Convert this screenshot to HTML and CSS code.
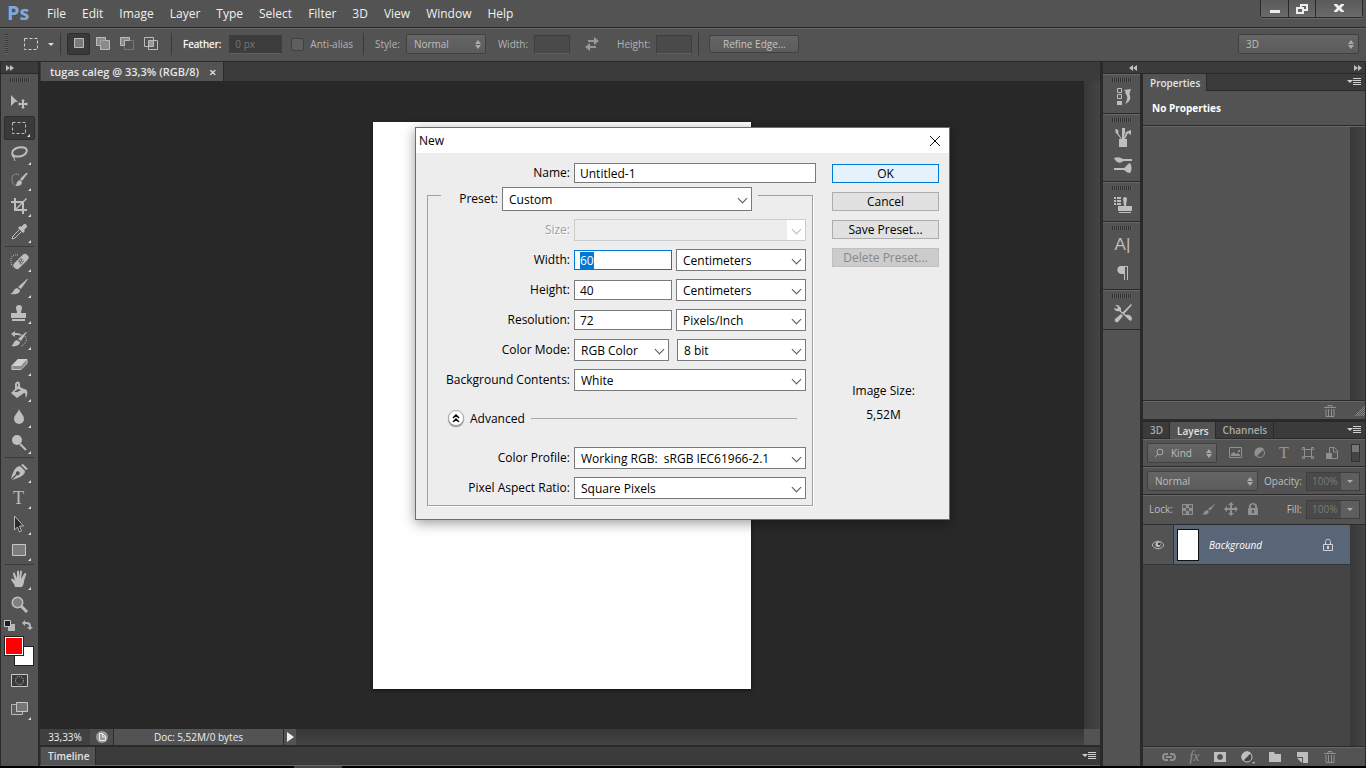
FILE: index.html
```
<!DOCTYPE html>
<html lang="en">
<head>
    <meta charset="UTF-8">
    <meta name="viewport" content="width=device-width, initial-scale=1.0">
    <title>tugas caleg @ 33,3% (RGB/8)</title>
    <link rel="stylesheet" href="styles.css">
</head>
<body>

<div class="app">
    <header class="menubar">
        <span class="logo">Ps</span>
        <nav class="menu">
            <a href="#">File</a>
            <a href="#">Edit</a>
            <a href="#">Image</a>
            <a href="#">Layer</a>
            <a href="#">Type</a>
            <a href="#">Select</a>
            <a href="#">Filter</a>
            <a href="#">3D</a>
            <a href="#">View</a>
            <a href="#">Window</a>
            <a href="#">Help</a>
        </nav>
        <div class="window-buttons">
            <button type="button" aria-label="Minimize"><svg width="12" height="12" viewBox="0 0 12 12"><path d="M1 7h10v3H1z"/></svg></button>
            <button type="button" aria-label="Restore"><svg width="12" height="12" viewBox="0 0 12 12"><path fill-rule="evenodd" d="M4 1h8v7H8v3H0V4h4zM6 3v1h2v2h2V3zM2 6v3h4V6z"/></svg></button>
            <button type="button" class="close" aria-label="Close"><svg width="12" height="12" viewBox="0 0 12 12"><path d="M1 1h3l2 2 2-2h3v1L8 5l3 3v1H8L6 7 4 9H1V8l3-3-3-3z"/></svg></button>
        </div>
    </header>

    <!-- Options bar for the marquee tool -->
    <div class="options">
        <span class="grip-v"></span>
        <button type="button" class="preset-tool" aria-label="Rectangular Marquee presets">
            <svg width="16" height="16" viewBox="0 0 16 16"><rect x="1.500" y="2.500" width="13" height="11" fill="none" stroke="#d0d0d0" stroke-dasharray="3 2"/></svg>
            <span class="caret"></span>
        </button>
        <span class="divider"></span>
        <div class="modes">
            <button type="button" class="active" aria-label="New selection"><svg width="16" height="16" viewBox="0 0 16 16"><path fill="#7a7a7a" stroke="#bbb" d="M3.500 2.500h9v9h-9z"/></svg></button>
            <button type="button" aria-label="Add to selection"><svg width="16" height="16" viewBox="0 0 16 16"><path fill="#8a8a8a" stroke="#bbb" d="M1.500 1.500h9v3h4v9h-9v-4h-4z"/><path fill="none" stroke="#a5a5a5" d="M5.500 9V4.500H10"/></svg></button>
            <button type="button" aria-label="Subtract from selection"><svg width="16" height="16" viewBox="0 0 16 16"><path fill="none" stroke="#777" d="M5.500 4.500h9v9h-9z"/><path fill="#8a8a8a" stroke="#bbb" d="M1.500 1.500h9v3h-5v5h-4z"/></svg></button>
            <button type="button" aria-label="Intersect with selection"><svg width="16" height="16" viewBox="0 0 16 16"><path fill="none" stroke="#bbb" d="M1.500 1.500h9v9h-9zM5.500 4.500h9v9h-9z"/><path fill="#999" d="M6 5h4v5H6z"/></svg></button>
        </div>
        <span class="divider"></span>
        <label class="strong" for="feather">Feather:</label>
        <input class="field feather" id="feather" type="text" value="0 px">
        <input class="check" id="anti" type="checkbox" disabled>
        <label class="anti-label" for="anti">Anti-alias</label>
        <span class="divider"></span>
        <label for="style">Style:</label>
        <span class="dark-select style-select"><select id="style"><option>Normal</option></select></span>
        <label for="opt-width">Width:</label>
        <input class="field short" id="opt-width" type="text" disabled>
        <button type="button" class="swap" aria-label="Swap width and height"><svg width="16" height="16" viewBox="0 0 16 16"><path fill="#999" d="M4 4h6V1l5 4-5 4V6H4zM12 10H6V7l-5 4 5 4v-3h6z"/></svg></button>
        <label for="opt-height">Height:</label>
        <input class="field short" id="opt-height" type="text" disabled>
        <span class="divider"></span>
        <button type="button" class="dark-button">Refine Edge...</button>
        <span class="dark-select workspace-select"><select aria-label="Workspace"><option>3D</option></select></span>
    </div>

    <div class="workspace">
        <aside class="tools">
            <div class="collapse"><button type="button" aria-label="Expand tools"><svg width="8" height="6" viewBox="0 0 8 6"><path d="M0 0l4 3-4 3zM4 0l4 3-4 3z"/></svg></button></div>
            <div class="grip"></div>
            <div class="tool-list">
                <button type="button" class="tool plain" aria-label="Move"><svg viewBox="0 0 20 20"><path d="M2 3l7 7-3 0-4 4z"/><path d="M14 7l2 2h-1v2h2v-1l2 2-2 2v-1h-2v2h1l-2 2-2-2h1v-2h-2v1l-2-2 2-2v1h2V9h-1z"/></svg></button>
                <button type="button" class="tool active" aria-label="Marquee"><svg viewBox="0 0 20 20"><rect class="line" x="3.500" y="4.500" width="13" height="11" stroke-dasharray="3 2"/></svg></button>
                <button type="button" class="tool" aria-label="Lasso"><svg viewBox="0 0 20 20"><ellipse class="line thick" cx="10.500" cy="8" rx="7.500" ry="4.500" transform="rotate(-14 10 8)"/><path class="line" d="M4 10c-2 2 0 4 2 3-1-3-3-1-1 1l1 3"/></svg></button>
                <button type="button" class="tool" aria-label="Quick Selection"><svg viewBox="0 0 20 20"><path class="line" stroke-dasharray="1 1" d="M10 5C8 3 3 4 3 8c0 3 0 6 3 7"/><path d="M19 3l-6 8-2-2 6-6zM11 10l2 2c0 4-4 4-7 4 2-1 1-5 5-6z"/></svg></button>
                <button type="button" class="tool" aria-label="Crop"><svg viewBox="0 0 20 20"><path fill-rule="evenodd" d="M5 2h2v3h7l3-3 1 1-3 3v7h3v2h-3v3h-2v-3H5V7H2V5h3zM7 7v5l5-5zM8 13h5V8z"/></svg></button>
                <button type="button" class="tool" aria-label="Eyedropper"><svg viewBox="0 0 20 20"><path d="M14 3c2-3 6 1 3 3l-2 2 1 1-2 2-5-5 2-2 1 1z"/><path class="line" d="M10 8l-6 6-1 3 3-1 6-6"/></svg></button>
                <hr>
                <button type="button" class="tool" aria-label="Healing Brush"><svg viewBox="0 0 20 20"><path class="line" stroke-dasharray="1 1" d="M9 4C4 3 2 6 2 9s0 6 3 7"/><rect x="3" y="7" width="18" height="7" rx="3" transform="rotate(-45 12 10.500)"/><path fill="#777" d="M12 7l3 3-3 4-3-4z"/><path d="M11 9h1v1h-1zM12 11h1v1h-1zM13 9h1v1h-1z"/></svg></button>
                <button type="button" class="tool" aria-label="Brush"><svg viewBox="0 0 20 20"><path d="M19 2l-7 10-3-2 9-8zM8 11l3 2c0 4-5 5-10 4 4-1 3-5 7-6z"/></svg></button>
                <button type="button" class="tool" aria-label="Clone Stamp"><svg viewBox="0 0 20 20"><path d="M7 5a3 3 0 0 1 6 0c0 2-1 2-1 5h5v5H2v-5h6C8 7 7 7 7 5zM3 16h13v2H3z"/></svg></button>
                <button type="button" class="tool" aria-label="History Brush"><svg viewBox="0 0 20 20"><path d="M2 5l4-3v2c5 0 6 1 8 3-3-1-5-1-8-1v2zM18 3l-6 9-3-2 8-7zM8 11l3 2c0 3-4 5-9 4 3-1 2-5 6-6z"/><path class="line" stroke-dasharray="1 1" d="M16 7c3 4 0 9-4 10"/></svg></button>
                <button type="button" class="tool" aria-label="Eraser"><svg viewBox="0 0 20 20"><path fill="#8c8c8c" stroke="#c8c8c8" d="M9 4.500h9v4l-6 6H3v-4z"/><path fill="#d0d0d0" d="M9 4h9l-6 7H3z"/></svg></button>
                <button type="button" class="tool" aria-label="Paint Bucket"><svg viewBox="0 0 20 20"><path class="line thick" d="M7 9V3c1-2 3-2 3 0v5"/><path fill-rule="evenodd" d="M9 5l6 3c4 0 4 5 2 9-1-3 0-5-2-5l-7 5-6-5zM9 8l-4 3h3l4-2z"/></svg></button>
                <button type="button" class="tool" aria-label="Blur"><svg viewBox="0 0 20 20"><path d="M10 2c2 5 5 6 5 10a5 5 0 0 1-10 0c0-4 4-6 5-10z"/></svg></button>
                <button type="button" class="tool" aria-label="Dodge"><svg viewBox="0 0 20 20"><circle cx="8" cy="7" r="5"/><path class="line thick" d="M11 11l6 6"/></svg></button>
                <hr>
                <button type="button" class="tool" aria-label="Pen"><svg viewBox="0 0 20 20"><path d="M12 3l2-1 5 5-2 1zM11 4l5 5c0 4-4 6-13 9l5-5a2 2 0 1 0-1-1l-5 5C4 9 6 5 11 4z"/></svg></button>
                <button type="button" class="tool" aria-label="Type"><span class="serif">T</span></button>
                <button type="button" class="tool" aria-label="Path Selection"><svg viewBox="0 0 20 20"><path fill="#282828" stroke="#b8b8b8" d="M5.500 2v14l3-3 2 5 2-1-2-5h4z"/></svg></button>
                <button type="button" class="tool" aria-label="Rectangle"><svg viewBox="0 0 20 20"><path fill="#7c7c7c" stroke="#c8c8c8" d="M3.500 4.500h13v11h-13z"/></svg></button>
                <hr>
                <button type="button" class="tool" aria-label="Hand"><svg viewBox="0 0 20 20"><path d="M6 18c0-3-4-6-4-8 2-1 3 1 4 2L4 5c0-2 2-2 2 0l2 4V3c0-2 2-2 2 0v6l1-6c0-2 2-2 2 0l-1 7 3-5c1-2 3-1 2 1l-2 6c0 3-1 4-2 6z"/></svg></button>
                <button type="button" class="tool plain" aria-label="Zoom"><svg viewBox="0 0 20 20"><circle class="line thick" cx="8.500" cy="7.500" r="5"/><circle fill="#808080" cx="8.500" cy="7.500" r="4"/><path class="line heavy" d="M12 11l6 6"/></svg></button>
            </div>
            <div class="swatch-controls">
                <svg width="11" height="11" viewBox="0 0 11 11"><path fill="#b8b8b8" d="M4 4h7v7H4z"/><path fill="#1e1e1e" stroke="#c8c8c8" d="M.5.5h6v6h-6z"/></svg>
                <svg width="11" height="11" viewBox="0 0 11 11"><path fill="#b8b8b8" d="M0 3l3-3v2c5 0 6 1 6 5h2l-3 3-3-3h2c0-3-1-3-4-3v2z"/></svg>
            </div>
            <div class="swatches">
                <button type="button" class="swatch back" aria-label="Background color"></button>
                <button type="button" class="swatch front" aria-label="Foreground color"></button>
            </div>
            <button type="button" class="tool plain mask" aria-label="Quick Mask"><svg viewBox="0 0 20 20"><path fill="#3a3a3a" stroke="#c8c8c8" d="M2.500 3.500h16v12h-16z"/><circle class="line" cx="10.500" cy="9.500" r="4" stroke-dasharray="1 1"/></svg></button>
            <button type="button" class="tool" aria-label="Screen Mode"><svg viewBox="0 0 20 20"><path fill="#5e5e5e" stroke="#b8b8b8" d="M2.500 5.500h11v10h-11z"/><path fill="#777" stroke="#c8c8c8" d="M7.500 3.500h11v9h-11z"/></svg></button>
        </aside>

        <main class="document">
            <div class="doc-tabs">
                <span class="doc-tab">tugas caleg @ 33,3% (RGB/8)<button type="button" aria-label="Close document">×</button></span>
            </div>
            <div class="canvas-row">
                <div class="canvas"><div class="page"></div></div>
                <div class="scrollbar"></div>
            </div>
            <div class="status">
                <span class="zoom">33,33%</span>
                <button type="button" class="export" aria-label="Export"><svg width="12" height="12" viewBox="0 0 12 12"><circle cx="6" cy="6" r="6" fill="#999"/><path fill="none" stroke="#eee" d="M3.500 2.500h3l3 3v4h-6zM6.500 3v3h3"/></svg></button>
                <span class="doc-size">Doc: 5,52M/0 bytes</span>
                <button type="button" class="more" aria-label="More"><svg width="7" height="10" viewBox="0 0 7 10"><path fill="#eee" d="M0 0l7 5-7 5z"/></svg></button>
                <span class="track"></span>
                <span class="corner"></span>
            </div>
            <div class="tabs timeline">
                <button type="button" class="tab active">Timeline</button>
                <button type="button" class="panel-menu" aria-label="Timeline menu"></button>
            </div>
        </main>

        <div class="side">
            <div class="collapse side-collapse">
                <button type="button" aria-label="Expand dock"><svg width="8" height="6" viewBox="0 0 8 6"><path d="M4 0v6L0 3zM8 0v6L4 3z"/></svg></button>
                <button type="button" aria-label="Collapse panels"><svg width="8" height="6" viewBox="0 0 8 6"><path d="M0 0l4 3-4 3zM4 0l4 3-4 3z"/></svg></button>
            </div>
            <div class="side-row">
                <div class="dock">
                    <div class="dock-group">
                        <div class="grip"></div>
                        <button type="button" aria-label="History"><svg viewBox="0 0 20 20"><path class="line" d="M4.500 1.500h4v4h-4zM4.500 7.500h4v4h-4z"/><path d="M4 14h5v4H4zM11 3l7-1-2 6-2-2zM14 4c6 6 3 11-2 13 3-5 3-8 0-11z"/></svg></button>
                    </div>
                    <div class="dock-group">
                        <div class="grip"></div>
                        <button type="button" aria-label="Brush Presets"><svg viewBox="0 0 20 20"><path d="M6 12h8v8H6zM2 2c4 0 4 3 3 4l4 6H8L4 7C2 6 3 4 2 2zM9 1h3v4l-1 7H9L9 5zM18 3v5l-3-2-3 6h-1l2-7z"/></svg></button>
                        <button type="button" aria-label="Brush"><svg viewBox="0 0 20 20"><path d="M1 3c4-2 8 0 9 1h9v2h-9c-2 3-7 2-9-3zM1 13h10c2-1 4-5 6-5 2 3 2 8 0 10-3 0-4-2-6-3H1z"/></svg></button>
                    </div>
                    <div class="dock-group">
                        <div class="grip"></div>
                        <button type="button" aria-label="Clone Source"><svg viewBox="0 0 20 20"><path d="M1 2h2v2H1zM4 2h4v2H4zM1 5h2v2H1zM4 5h4v2H4zM1 8h2v2H1zM4 8h4v2H4zM10 4a2 2 0 0 1 4 0l-1 7h6v5H5v-5h6zM6 17h12v1H6z"/></svg></button>
                    </div>
                    <div class="dock-group">
                        <div class="grip"></div>
                        <button type="button" class="glyph" aria-label="Character">A|</button>
                        <button type="button" aria-label="Paragraph"><svg viewBox="0 0 20 20"><path d="M8 3h7v14h-1V4h-2v13h-1v-6H9C3 11 3 3 8 3z"/></svg></button>
                    </div>
                    <div class="dock-group">
                        <div class="grip"></div>
                        <button type="button" aria-label="Tool Presets"><svg viewBox="0 0 20 20"><path d="M2 2l3 0 3 3v3l5 4c3-1 6 1 6 4l-1 2-2-1-2-2-2-2-6-5C4 9 1 7 1 5l3 1 1-2zM18 1l1 1-8 9-2-1zM8 11l2 2-5 6c-2 1-4-1-3-3z"/></svg></button>
                    </div>
                </div>

                <div class="panels">
                    <section class="properties">
                        <div class="tabs">
                            <button type="button" class="tab active">Properties</button>
                            <button type="button" class="panel-menu" aria-label="Properties menu"></button>
                        </div>
                        <div class="no-properties">No Properties</div>
                        <div class="properties-body"><div class="scrollbar"></div></div>
                        <div class="panel-footer">
                            <button type="button" aria-label="Delete"><svg width="12" height="12" viewBox="0 0 12 12"><path fill="none" stroke="#909090" d="M0 2.500h12M4 2V.5h4V2M2 4v7.500h8V4M4.500 4v7M7.500 4v7"/></svg></button>
                            <span class="resizer"></span>
                        </div>
                    </section>

                    <section class="layers">
                        <div class="tabs">
                            <button type="button" class="tab">3D</button>
                            <button type="button" class="tab active">Layers</button>
                            <button type="button" class="tab">Channels</button>
                            <button type="button" class="panel-menu" aria-label="Layers menu"></button>
                        </div>
                        <div class="layer-row">
                            <span class="dark-select kind">
                                <svg width="10" height="10" viewBox="0 0 10 10"><circle cx="6" cy="4" r="3" fill="none" stroke="#aaa"/><path stroke="#aaa" d="M4 6L1 9"/></svg>
                                <select aria-label="Filter type"><option>Kind</option></select>
                            </span>
                            <div class="filters">
                                <button type="button" aria-label="Pixel layers"><svg viewBox="0 0 14 14"><path fill="none" stroke="#909090" d="M.5 1.500h12v10H.5z"/><path d="M2 10V8l3-2 2 2 2-1 2 2v1zM9 4h2v2H9z"/></svg></button>
                                <button type="button" aria-label="Adjustment layers"><svg viewBox="0 0 14 14"><circle cx="7" cy="7" r="4.500" fill="#555" stroke="#909090"/><path d="M3 11A5 5 0 1 1 11 3z"/></svg></button>
                                <button type="button" class="serif" aria-label="Type layers">T</button>
                                <button type="button" aria-label="Shape layers"><svg viewBox="0 0 14 14"><path fill="none" stroke="#909090" d="M3.500 3.500h7v7h-7zM1.500 1.500h2v2h-2zM10.500 1.500h2v2h-2zM1.500 10.500h2v2h-2zM10.500 10.500h2v2h-2z"/></svg></button>
                                <button type="button" aria-label="Smart objects"><svg viewBox="0 0 14 14"><path fill="none" stroke="#909090" d="M4.500 7V1.500h5l3 3v8H7M8.500 2v4h4"/><path d="M1 7h6v6H1z"/></svg></button>
                            </div>
                            <button type="button" class="toggle" aria-label="Toggle filtering"></button>
                        </div>
                        <div class="layer-row">
                            <span class="dark-select blend"><select aria-label="Blend mode"><option>Normal</option></select></span>
                            <label class="amount-label" for="opacity">Opacity:</label>
                            <span class="amount"><input id="opacity" type="text" value="100%" disabled><button type="button" aria-label="Opacity slider"><span class="caret"></span></button></span>
                        </div>
                        <div class="layer-row lock-row">
                            <span class="lock-label">Lock:</span>
                            <div class="locks">
                                <button type="button" aria-label="Lock transparent pixels"><svg viewBox="0 0 14 14"><path fill="#909090" d="M2 2h11v11H2z"/><path fill="#5e5e5e" d="M3 3h3v3H3zM9 3h3v3H9zM6 6h3v3H6zM3 9h3v3H3zM9 9h3v3H9z"/></svg></button>
                                <button type="button" aria-label="Lock image pixels"><svg viewBox="0 0 16 14"><path d="M16 0L9 9 7 7zM6 8l2 2c-1 3-4 4-8 3 3-1 2-4 6-5z"/></svg></button>
                                <button type="button" aria-label="Lock position"><svg viewBox="0 0 14 14"><path d="M7 0l3 3H8v3h3V4l3 3-3 3V8H8v3h2l-3 3-3-3h2V8H3v2L0 7l3-3v2h3V3H4z"/></svg></button>
                                <button type="button" aria-label="Lock all"><svg viewBox="0 0 14 14"><path fill-rule="evenodd" d="M2 6h1V4c0-4 8-4 8 0v2h1v7H2zM5 6h4V4c0-2-4-2-4 0zM6 8v3h2V8z"/></svg></button>
                            </div>
                            <label class="amount-label" for="fill">Fill:</label>
                            <span class="amount"><input id="fill" type="text" value="100%" disabled><button type="button" aria-label="Fill slider"><span class="caret"></span></button></span>
                        </div>
                        <div class="layer-list">
                            <div class="layer-items">
                                <div class="layer">
                                    <button type="button" class="eye" aria-label="Toggle visibility"><svg width="12" height="10" viewBox="0 0 12 10"><path fill="none" stroke="#c0c0c0" d="M0 5c3-5 9-5 12 0-3 5-9 5-12 0z"/><circle cx="6" cy="4.500" r="2.500" fill="#c0c0c0"/><path fill="#333" d="M6 3h2v2H6z"/></svg></button>
                                    <div class="layer-main">
                                        <span class="thumb"></span>
                                        <span class="layer-name">Background</span>
                                        <svg width="12" height="14" viewBox="0 0 12 14"><path fill="none" stroke="#d0d4da" d="M1.500 6.500h9v6h-9zM3.500 6V3.500c0-3 5-3 5 0V6"/><path fill="#d0d4da" d="M5 8h2v3H5z"/></svg>
                                    </div>
                                </div>
                            </div>
                            <div class="scrollbar"></div>
                        </div>
                        <div class="panel-footer layer-actions">
                            <button type="button" aria-label="Link layers"><svg viewBox="0 0 14 14"><path fill="none" stroke="#909090" stroke-width="2" d="M6 4H4C0 4 0 10 4 10h2M8 4h2c4 0 4 6 0 6H8M4 7h6"/></svg></button>
                            <button type="button" class="fx" aria-label="Layer style">fx</button>
                            <button type="button" aria-label="Add mask"><svg viewBox="0 0 14 14"><path fill-rule="evenodd" d="M1 2h12v10H1zM7 4a3 3 0 1 0 .1 0z"/></svg></button>
                            <button type="button" aria-label="New adjustment layer"><svg viewBox="0 0 14 14"><circle cx="6" cy="7" r="5" fill="#444" stroke="#c8c8c8"/><path d="M2 11A5 5 0 0 1 10 3zM11 12h3l-1 2z"/></svg></button>
                            <button type="button" aria-label="New group"><svg viewBox="0 0 14 14"><path d="M1 2h5l1 2h6v8H1z"/></svg></button>
                            <button type="button" aria-label="New layer"><svg viewBox="0 0 14 14"><path d="M2 2h11v11H8V7H2zM2 8h5v5z"/></svg></button>
                            <button type="button" aria-label="Delete layer"><svg viewBox="0 0 14 14"><path fill="none" stroke="#909090" d="M1 3.500h12M5 3V1.500h4V3M3 5v7.500h8V5M5.500 5v7M8.500 5v7"/></svg></button>
                        </div>
                    </section>
                </div>
            </div>
        </div>
    </div>
    <div class="taskbar-edge"></div>
</div>

<div class="dialog" role="dialog" aria-labelledby="dialog-title">
    <div class="dialog-title">
        <span id="dialog-title">New</span>
        <button type="button" aria-label="Close dialog"><svg width="12" height="12" viewBox="0 0 12 12"><path fill="none" stroke="#111" d="M1 1l10 10M11 1L1 11"/></svg></button>
    </div>
    <form class="dialog-body">
        <div class="dialog-main">
            <div class="row name-row">
                <label for="name">Name:</label>
                <input id="name" type="text" value="Untitled-1">
            </div>
            <fieldset>
                <legend>
                    <label for="preset">Preset:</label>
                    <span class="select preset"><select id="preset"><option>Custom</option></select></span>
                </legend>
                <div class="row disabled">
                    <label for="size">Size:</label>
                    <span class="select"><select id="size" disabled><option></option></select></span>
                </div>
                <div class="row">
                    <label for="width">Width:</label>
                    <input id="width" type="text" value="60">
                    <span class="select unit"><select aria-label="Width unit"><option>Centimeters</option></select></span>
                </div>
                <div class="row">
                    <label for="height">Height:</label>
                    <input id="height" type="text" value="40">
                    <span class="select unit"><select aria-label="Height unit"><option>Centimeters</option></select></span>
                </div>
                <div class="row">
                    <label for="resolution">Resolution:</label>
                    <input id="resolution" type="text" value="72">
                    <span class="select unit"><select aria-label="Resolution unit"><option>Pixels/Inch</option></select></span>
                </div>
                <div class="row mode-row">
                    <label for="mode">Color Mode:</label>
                    <span class="select"><select id="mode"><option>RGB Color</option></select></span>
                    <span class="select unit"><select aria-label="Bit depth"><option>8 bit</option></select></span>
                </div>
                <div class="row">
                    <label for="contents">Background Contents:</label>
                    <span class="select"><select id="contents"><option>White</option></select></span>
                </div>
                <div class="advanced">
                    <button type="button" aria-label="Toggle advanced options"><svg width="8" height="8" viewBox="0 0 8 8"><path fill="none" stroke="#000" stroke-width="1.500" d="M1 4l3-3 3 3M1 8l3-3 3 3"/></svg></button>
                    <span>Advanced</span>
                </div>
                <div class="row">
                    <label for="profile">Color Profile:</label>
                    <span class="select"><select id="profile"><option>Working RGB:&nbsp; sRGB IEC61966-2.1</option></select></span>
                </div>
                <div class="row">
                    <label for="ratio">Pixel Aspect Ratio:</label>
                    <span class="select"><select id="ratio"><option>Square Pixels</option></select></span>
                </div>
            </fieldset>
        </div>
        <div class="dialog-side">
            <button type="button" class="primary">OK</button>
            <button type="button">Cancel</button>
            <button type="button">Save Preset...</button>
            <button type="button" disabled>Delete Preset...</button>
            <div class="image-size">
                <span>Image Size:</span>
                <span>5,52M</span>
            </div>
        </div>
    </form>
</div>

<script>
    // Start with the width value selected
    document.getElementById('width').select();
</script>

</body>
</html>
```
FILE: styles.css
```
:root {
    --panel: #535353;
    --bar: #3b3b3b;
    --canvas: #282828;
    --edge: #2a2a2a;
    --light: #686868;
    --icon: #bebebe;
    --blue: #0078d7;
}
* {
    box-sizing: border-box;
}
body {
    margin: 0;
    font-family: "Open Sans", "Noto Sans", sans-serif;
    font-size: 10px;
    color: #d6d6d6;
    background: #000;
    overflow: hidden;
}
button, input, select {
    font: inherit;
    color: inherit;
    margin: 0;
    padding: 0;
    border: 0;
    border-radius: 0;
    background: none;
    outline: none;
}
select {
    appearance: none;
    width: 100%;
    height: 100%;
}
svg {
    display: block;
    flex: none;
    fill: var(--icon);
}
.line {
    fill: none;
    stroke: var(--icon);
}
.thick {
    stroke-width: 2;
}
.heavy {
    stroke-width: 3;
}
.app {
    display: flex;
    flex-direction: column;
    height: 100vh;
    background: var(--panel);
}

/* menu bar */
.menubar {
    display: flex;
    align-items: center;
    height: 28px;
    padding-bottom: 1px;
    border-bottom: 1px solid var(--edge);
}
.logo {
    width: 40px;
    padding-left: 7px;
    font-size: 20px;
    line-height: 24px;
    font-weight: 700;
    color: #7fabdc;
}
.menu {
    display: flex;
    gap: 16px;
    padding-left: 7px;
    font-size: 12px;
}
.menu a {
    color: #f0f0f0;
    text-decoration: none;
}
.window-buttons {
    display: flex;
    align-self: flex-start;
    margin-left: auto;
    margin-right: 3px;
    border: 1px solid var(--edge);
    border-top: 0;
    border-radius: 0 0 3px 3px;
    box-shadow: 0 1px 0 var(--light);
}
.window-buttons button {
    display: flex;
    align-items: center;
    justify-content: center;
    width: 27px;
    height: 17px;
    border-left: 1px solid var(--edge);
    background: linear-gradient(#5a5a5a, #6a6a6a);
}
.window-buttons button:first-child {
    border-left: 0;
}
.window-buttons .close {
    width: 47px;
}
.window-buttons svg {
    fill: #eee;
}

/* options bar */
.options {
    display: flex;
    align-items: center;
    height: 34px;
    padding-left: 5px;
    padding-bottom: 2px;
    border-top: 1px solid var(--light);
    border-bottom: 1px solid var(--edge);
    color: #b4b4b4;
}
.grip-v {
    width: 3px;
    height: 20px;
    background: repeating-linear-gradient(#333 0 1px, #666 1px 2px);
}
.preset-tool {
    display: flex;
    align-items: center;
    gap: 9px;
    margin-left: 15px;
}
.caret {
    border: 3px solid transparent;
    border-top-color: #ddd;
    border-bottom: 0;
}
.divider {
    width: 1px;
    height: 22px;
    margin: 0 6px;
    background: #3a3a3a;
}
.modes {
    display: flex;
    gap: 1px;
    margin-right: 3px;
}
.modes button {
    display: grid;
    place-items: center;
    width: 23px;
    height: 22px;
}
.modes .active {
    border: 1px solid #2d2d2d;
    border-radius: 2px;
    background: #3a3a3a;
}
.strong {
    color: #fff;
    text-shadow: 0 0 1px #ccc;
}
.field {
    height: 19px;
    padding-left: 5px;
    border: 1px solid #3e3e3e;
    border-bottom-color: #5e5e5e;
    background: #4a4a4a;
}
.feather {
    width: 53px;
    margin: 0 9px 0 8px;
    background: #3c3c3c;
    color: #777;
}
.check {
    appearance: none;
    width: 13px;
    height: 13px;
    border: 1px solid #404040;
    border-radius: 2px;
    background: #5e5e5e;
}
.anti-label {
    margin: 0 4px 0 6px;
}
.dark-select {
    position: relative;
    display: flex;
    align-items: center;
    height: 20px;
    border: 1px solid #404040;
    border-radius: 2px;
    background: linear-gradient(#656565, #5b5b5b);
    color: #bebebe;
}
.dark-select select {
    padding-left: 7px;
}
.dark-select::before,
.dark-select::after {
    content: "";
    position: absolute;
    right: 4px;
    top: 5px;
    border: 3px solid transparent;
    border-top: 0;
    border-bottom: 4px solid #aaa;
    pointer-events: none;
}
.dark-select::after {
    top: 10px;
    border-bottom: 0;
    border-top: 4px solid #aaa;
}
.style-select {
    width: 80px;
    margin: 0 12px 0 6px;
}
.options .divider + label {
    margin-left: 5px;
}
.short {
    width: 36px;
    margin-left: 6px;
}
.swap {
    margin: 0 17px 0 14px;
}
.dark-button {
    width: 90px;
    height: 18px;
    margin-left: 4px;
    border: 1px solid #404040;
    border-radius: 2px;
    background: linear-gradient(#656565, #5b5b5b);
    color: #c4c4c4;
}
.workspace-select {
    width: 121px;
    margin-left: auto;
    margin-right: 7px;
}

/* shared panel parts */
.workspace {
    display: flex;
    flex: 1;
    min-height: 0;
}
.collapse {
    display: flex;
    align-items: center;
    height: 12px;
    padding-left: 5px;
    border-bottom: 1px solid var(--edge);
    background: var(--bar);
}
.grip {
    width: 20px;
    height: 4px;
    margin: 4px auto 3px;
    background: repeating-linear-gradient(90deg, #303030 0 1px, #606060 1px 2px);
}
.scrollbar {
    flex: none;
    width: 16px;
    background: linear-gradient(90deg, #383838, #444);
}
.tabs {
    display: flex;
    flex: none;
    height: 17px;
    background: var(--bar);
    border-bottom: 1px solid var(--edge);
}
.tab {
    padding: 0 6px 0 7px;
    border-right: 1px solid var(--edge);
    font-weight: 600;
    color: #aaa;
}
.tab.active {
    height: 17px;
    background: var(--panel);
    color: #e2e2e2;
}
.panel-menu {
    position: relative;
    align-self: center;
    width: 8px;
    height: 8px;
    margin-left: auto;
    margin-right: 4px;
    background: repeating-linear-gradient(#d0d0d0 0 1px, transparent 1px 2px);
}
.panel-menu::before {
    content: "";
    position: absolute;
    left: -6px;
    top: 2px;
    border: 3px solid transparent;
    border-top-color: #d0d0d0;
    border-bottom: 0;
}
.serif {
    font-family: "Liberation Serif", serif;
    font-size: 18px;
    color: var(--icon);
}

/* toolbox */
.tools {
    flex: none;
    width: 40px;
    border-left: 1px solid var(--edge);
    border-right: 2px solid var(--edge);
}
.tool-list {
    display: flex;
    flex-direction: column;
    padding-top: 4px;
}
.tool-list hr {
    width: 29px;
    margin: 1px auto;
    border: 0;
    border-top: 1px solid #3a3a3a;
}
.tool {
    position: relative;
    display: grid;
    place-items: center;
    width: 31px;
    height: 26px;
    margin-left: 3px;
    padding-right: 2px;
}
.tool svg {
    width: 20px;
    height: 20px;
}
.tool.active {
    height: 24px;
    margin-top: 1px;
    margin-bottom: 1px;
    border: 1px solid #2c2c2c;
    border-radius: 2px;
    background: #3a3a3a;
}
/* flyout mark in the corner */
.tool::after {
    content: "";
    position: absolute;
    right: 4px;
    bottom: 2px;
    border-left: 3px solid transparent;
    border-bottom: 3px solid #ddd;
}
.tool.plain::after {
    display: none;
}
.swatch-controls {
    display: flex;
    justify-content: space-between;
    padding: 2px 5px 5px 3px;
}
.swatches {
    position: relative;
    width: 30px;
    height: 30px;
    margin-left: 3px;
}
.swatch {
    position: absolute;
    width: 20px;
    height: 20px;
    border: 1px solid #222;
    background: #fff;
}
.front {
    top: 0;
    left: 0;
    background: #f00;
    box-shadow: inset 0 0 0 1px #fff;
}
.back {
    right: 0;
    bottom: 0;
}
.mask {
    margin-top: 2px;
    margin-bottom: 2px;
}

/* document window */
.document {
    display: flex;
    flex: 1;
    flex-direction: column;
    min-width: 0;
}
.doc-tabs {
    display: flex;
    height: 19px;
    padding-left: 1px;
    background: var(--bar);
}
.doc-tab {
    display: flex;
    align-items: center;
    padding: 0 7px 0 9px;
    border-right: 1px solid var(--edge);
    background: var(--panel);
    font-size: 11px;
    font-weight: 600;
    color: #e6e6e6;
}
.doc-tab button {
    margin-left: 10px;
    font-size: 13px;
}
.canvas-row {
    display: flex;
    flex: 1;
    min-height: 0;
}
.canvas {
    display: flex;
    flex: 1;
    align-items: center;
    justify-content: center;
    min-width: 0;
    overflow: hidden;
    background: var(--canvas);
}
.page {
    flex: none;
    width: 378px;
    height: 567px;
    background: #fff;
    box-shadow: 0 1px 3px #111;
}
.status {
    display: flex;
    height: 17px;
    border-bottom: 1px solid var(--edge);
    background: #404040;
    color: #f0f0f0;
}
.status > * {
    display: flex;
    align-items: center;
    justify-content: center;
}
.zoom {
    width: 50px;
}
.export {
    width: 23px;
    background: #4c4c4c;
}
.doc-size {
    width: 170px;
    border-left: 1px solid var(--edge);
    background: var(--panel);
}
.more {
    width: 13px;
    border-left: 1px solid var(--edge);
    background: var(--panel);
}
.track {
    flex: 1;
    background: linear-gradient(#363636, #444);
}
.corner {
    width: 16px;
    background: var(--panel);
}
.timeline {
    height: 20px;
    border-top: 1px solid var(--edge);
    border-bottom-color: var(--light);
}
.timeline .tab {
    height: 18px;
    margin-left: 1px;
}

/* right side */
.side {
    display: flex;
    flex: none;
    flex-direction: column;
    width: 266px;
    border-left: 3px solid var(--edge);
    border-right: 1px solid var(--edge);
}
.side .scrollbar {
    width: 15px;
}
.side-collapse {
    justify-content: space-between;
    padding: 0 3px 0 26px;
}
.side-row {
    display: flex;
    flex: 1;
    min-height: 0;
}
.dock {
    flex: none;
    width: 40px;
    border-right: 3px solid var(--edge);
}
.dock-group {
    padding-bottom: 2px;
    border-top: 1px solid var(--light);
    border-bottom: 1px solid var(--edge);
}
.dock-group .grip {
    margin: 3px auto 1px;
}
.dock-group button {
    display: grid;
    place-items: center;
    width: 100%;
    height: 28px;
    padding-left: 2px;
}
.dock-group svg {
    width: 20px;
    height: 20px;
}
.dock-group .glyph {
    font-family: "Liberation Sans", sans-serif;
    font-size: 17px;
    color: var(--icon);
}
.panels {
    display: flex;
    flex: 1;
    flex-direction: column;
    min-width: 0;
}
.properties {
    display: flex;
    flex: 1;
    flex-direction: column;
    min-height: 0;
    border-bottom: 3px solid var(--edge);
}
.no-properties {
    padding: 10px 9px;
    border-bottom: 1px solid var(--edge);
    font-size: 10px;
    line-height: 14px;
    font-weight: 700;
    color: #fff;
}
.properties-body {
    display: flex;
    flex: 1;
    justify-content: flex-end;
    border-top: 1px solid var(--light);
}
.panel-footer {
    display: flex;
    align-items: center;
    height: 18px;
    border-top: 1px solid var(--light);
    box-shadow: 0 -1px 0 var(--edge);
}
.properties .panel-footer {
    justify-content: flex-end;
    gap: 18px;
}
.resizer {
    width: 11px;
    height: 11px;
    background: repeating-conic-gradient(#888 0 25%, transparent 0 50%) 0 0 / 2px 2px;
    clip-path: polygon(100% 0, 100% 100%, 0 100%);
}
.layers {
    display: flex;
    flex: none;
    flex-direction: column;
    height: 344px;
}
.layer-row {
    display: flex;
    align-items: center;
    height: 28px;
    padding: 0 5px 0 4px;
    border-top: 1px solid var(--light);
    border-bottom: 1px solid var(--edge);
    color: #bebebe;
}
.lock-row {
    height: 30px;
    padding-bottom: 2px;
}
.kind {
    width: 70px;
    padding-left: 6px;
}
.blend {
    width: 111px;
}
.filters,
.locks {
    display: flex;
    flex: 1;
    align-items: center;
}
.filters {
    justify-content: space-between;
    padding: 0 12px;
}
.filters button,
.locks button {
    width: 14px;
    height: 20px;
    display: grid;
    place-items: center;
}
.filters svg,
.locks svg {
    width: 14px;
    height: 14px;
    fill: #909090;
}
.filters .serif {
    font-size: 16px;
    color: #999;
}
.toggle {
    width: 9px;
    height: 18px;
    border: 1px solid #333;
    background: linear-gradient(#777 0 45%, #444 45%);
}
.amount-label {
    margin-left: auto;
    margin-right: 4px;
}
.amount {
    display: flex;
    width: 54px;
    height: 19px;
    border: 1px solid #3e3e3e;
}
.amount input {
    flex: 1;
    min-width: 0;
    padding-left: 5px;
    background: #4a4a4a;
    color: #7a7a7a;
}
.amount button {
    display: grid;
    place-items: center;
    width: 18px;
    background: #5e5e5e;
}
.amount .caret {
    border-top-color: #aaa;
}
.lock-label {
    width: 30px;
    padding-left: 2px;
}
.locks {
    gap: 8px;
    padding-left: 3px;
}
.layer-list {
    display: flex;
    flex: 1;
    min-height: 0;
    background: #454545;
}
.layer-items {
    flex: 1;
}
.layer {
    display: flex;
    height: 40px;
    border-bottom: 1px solid #333;
}
.eye {
    display: grid;
    place-items: center;
    width: 31px;
    border-right: 1px solid #333;
    background: var(--panel);
}
.layer-main {
    display: flex;
    flex: 1;
    align-items: center;
    padding: 0 16px 0 3px;
    background: #596678;
    color: #fff;
}
.thumb {
    width: 22px;
    height: 32px;
    margin-right: 10px;
    border: 1px solid #111;
    background: #fff;
}
.layer-name {
    flex: 1;
    font-style: italic;
}
.layer-actions {
    height: 19px;
    justify-content: space-between;
    padding: 0 28px 0 19px;
}
.layer-actions svg {
    width: 14px;
    height: 14px;
}
.fx {
    font-family: "Liberation Serif", serif;
    font-size: 14px;
    font-style: italic;
    color: #909090;
}
.taskbar-edge {
    height: 2px;
    background: linear-gradient(90deg, #000 294px, #444 294px 342px, #000 342px);
}

/* New document dialog */
.dialog {
    position: absolute;
    top: 127px;
    left: 50%;
    width: 535px;
    margin-left: -268px;
    border: 1px solid #6e6e6e;
    background: #ededed;
    box-shadow: 0 3px 12px rgba(0, 0, 0, 0.4);
    font-size: 12px;
    color: #000;
}
.dialog-title {
    display: flex;
    align-items: center;
    justify-content: space-between;
    height: 25px;
    padding: 0 8px 0 3px;
    background: #fff;
}
.dialog-body {
    display: grid;
    grid-template-columns: 1fr 107px;
    gap: 16px;
    padding: 10px 10px 13px 11px;
}
.row {
    display: grid;
    grid-template-columns: 1fr 98px 130px;
    column-gap: 4px;
    align-items: center;
    height: 22px;
    margin-bottom: 8px;
}
.row label {
    padding-bottom: 2px;
    text-align: right;
}
.row > .select:last-child:nth-child(2) {
    grid-column: 2 / 4;
}
.row input {
    width: 100%;
    height: 20px;
    padding-left: 5px;
    border: 1px solid #7a7a7a;
    background: #fff;
}
.row input:focus {
    border-color: var(--blue);
}
.row input::selection {
    background: var(--blue);
    color: #fff;
}
.name-row {
    grid-template-columns: 1fr 242px;
    height: 20px;
    margin-bottom: 4px;
}
.mode-row {
    grid-template-columns: 1fr 95px 133px;
}
.mode-row .unit {
    margin-left: 4px;
}
.select {
    position: relative;
    height: 22px;
    border: 1px solid #7a7a7a;
    background: #fff;
}
.select select {
    display: block;
    padding-left: 6px;
}
.select::after {
    content: "";
    position: absolute;
    right: 5px;
    top: 6px;
    width: 6px;
    height: 6px;
    border: solid #555;
    border-width: 0 1px 1px 0;
    transform: rotate(45deg);
    pointer-events: none;
}
.disabled label {
    color: #a0a0a0;
    text-shadow: 1px 1px 0 #fff;
}
.disabled .select {
    border-color: #ccc;
    background: linear-gradient(90deg, #ededed 212px, #fff 212px);
}
.disabled .select::after {
    border-color: #bbb;
}
fieldset {
    min-width: 0;
    margin: 0 3px 0 0;
    padding: 16px 6px 6px;
    border: 1px solid #a0a0a0;
    box-shadow: 1px 1px 0 #fff;
}
fieldset .row:last-child {
    margin-bottom: 0;
}
legend {
    display: flex;
    align-items: flex-start;
    justify-content: flex-end;
    gap: 4px;
    width: 317px;
    height: 16px;
    margin-left: 7px;
    padding: 0 6px 0 0;
    line-height: 24px;
}
.preset {
    width: 250px;
    height: 24px;
}
.preset::after {
    top: 7px;
}
.advanced {
    display: flex;
    align-items: center;
    gap: 6px;
    height: 22px;
    margin: 16px 9px 18px 14px;
}
.advanced::after {
    content: "";
    flex: 1;
    height: 1px;
    background: #aaa;
}
.advanced button {
    display: grid;
    place-items: center;
    width: 16px;
    height: 16px;
    border: 1px solid #aaa;
    border-radius: 50%;
    background: #fff;
    box-shadow: 0 1px 1px #888;
}
.dialog-side {
    display: flex;
    flex-direction: column;
    gap: 9px;
    padding-top: 1px;
}
.dialog-side button {
    height: 19px;
    border: 1px solid #adadad;
    background: #e1e1e1;
}
.dialog-side .primary {
    border-color: var(--blue);
    background: #e5f1fb;
}
.dialog-side button:disabled {
    border-color: #bfbfbf;
    background: #ccc;
    color: #888;
}
.image-size {
    display: flex;
    flex-direction: column;
    gap: 8px;
    margin-top: 107px;
    padding-right: 4px;
    line-height: 16px;
    text-align: center;
}
```
